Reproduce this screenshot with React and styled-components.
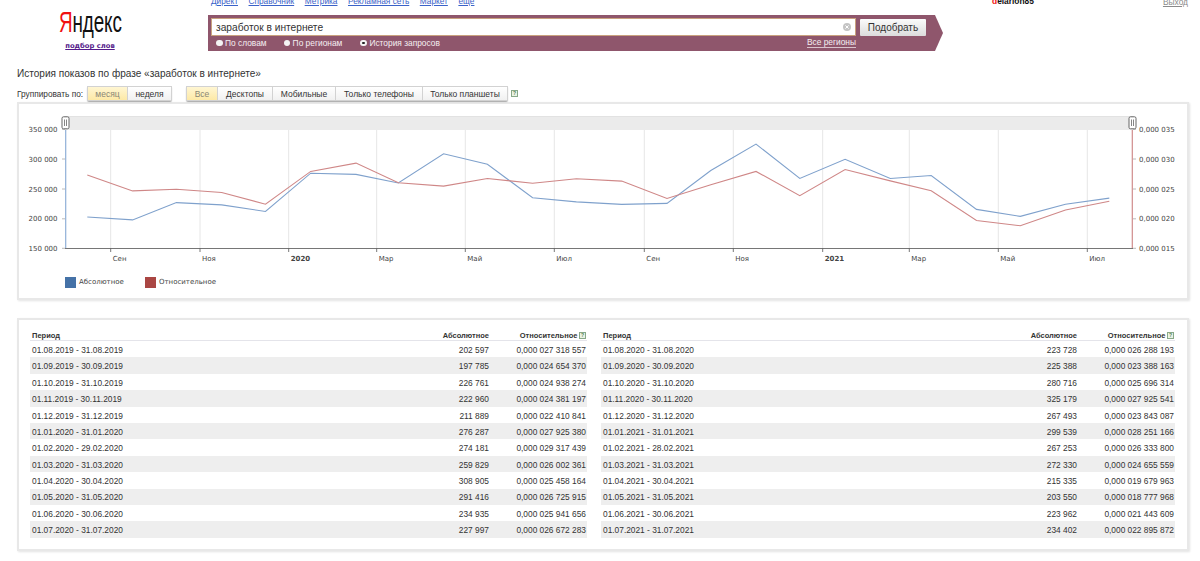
import React from 'react';
import styled, { createGlobalStyle } from 'styled-components';

const Global = createGlobalStyle`
  html, body { margin: 0; padding: 0; background: #fff; }
  body { font-family: "Liberation Sans", Arial, sans-serif; color: #333; }
  #root { width: 1200px; height: 561px; overflow: hidden; }
`;

const Page = styled.div`
  width: 1200px;
  height: 561px;
  overflow: hidden;
`;

const Header = styled.header`
  display: flex;
  height: 67px;
  align-items: flex-start;
`;

const LogoColumn = styled.div`
  width: 180px;
  margin-right: 28px;
  padding-top: 6px;
  display: flex;
  flex-direction: column;
  align-items: center;
`;

const LogoBox = styled.div`
  width: 62px;
  height: 31px;
  overflow: visible;
`;

const LogoText = styled.div`
  font-size: 29.5px;
  line-height: 31px;
  color: #111;
  white-space: nowrap;
  transform: scaleX(0.64);
  transform-origin: left center;
  letter-spacing: -0.2px;
  span { color: #f01010; }
`;

const WordsLink = styled.a`
  margin-top: 5px;
  font-family: "DejaVu Sans", sans-serif;
  font-size: 6.8px;
  font-weight: bold;
  color: #551a8b;
  text-decoration: underline;
`;

const SearchColumn = styled.div`
  width: 735px;
`;

const Nav = styled.nav`
  display: flex;
  gap: 10.5px;
  height: 15px;
  margin-top: -4px;
  padding-left: 3px;
  font-size: 8.3px;
  line-height: 11px;
`;

const NavLink = styled.a`
  color: #3a62c8;
  text-decoration: underline;
`;

const Band = styled.div`
  width: 735px;
  height: 36px;
  margin-top: 4px;
  background: #8f566c;
  clip-path: polygon(0 0, 727px 0, 735px 18px, 727px 36px, 0 36px);
  box-sizing: border-box;
  padding: 3px 0 0 3px;
`;

const SearchRow = styled.div`
  display: flex;
  align-items: center;
  gap: 4px;
`;

const InputBox = styled.div`
  width: 645px;
  height: 18px;
  box-sizing: border-box;
  background: #fff;
  border: 1px solid #c9a27e;
  padding: 0 4px 0 4px;
  display: flex;
  align-items: center;
  justify-content: space-between;
  font-size: 10.2px;
  color: #333;
`;

const ClearIcon = styled.svg`
  width: 8px;
  height: 8px;
  flex: none;
`;

const PickButton = styled.button`
  width: 66px;
  height: 17px;
  padding: 0;
  border: 0;
  border-radius: 1px;
  background: linear-gradient(#fbfbfb, #dcdcdc);
  font-family: inherit;
  font-size: 10px;
  color: #333;
`;

const OptionsRow = styled.div`
  display: flex;
  align-items: center;
  height: 14px;
  padding: 0 0 0 5px;
  width: 645px;
  box-sizing: border-box;
  font-size: 8.4px;
  color: #f5eef1;
`;

const Option = styled.label`
  display: flex;
  align-items: center;
  gap: 2.5px;
  margin-right: ${p => p.$gap}px;
`;

const RadioMark = styled.i`
  width: 6.5px;
  height: 6.5px;
  border-radius: 50%;
  background: ${p => (p.$on ? '#222' : '#f4f4f4')};
  border: ${p => (p.$on ? '2px solid #f4f4f4' : '0')};
  box-sizing: border-box;
`;

const Regions = styled.a`
  margin-left: auto;
  color: #f5eef1;
  border-bottom: 1px solid #d9c3cc;
  line-height: 9px;
`;

const UserArea = styled.div`
  flex: 1;
  display: flex;
  justify-content: space-between;
  padding: 0 12px 0 49px;
  margin-top: -4px;
`;

const UserName = styled.b`
  font-size: 8.4px;
  line-height: 10px;
  color: #111;
  span { color: #f01010; }
`;

const Logout = styled.a`
  margin-top: 1px;
  font-size: 8.4px;
  line-height: 10px;
  color: #8a8a8a;
  text-decoration: underline;
`;

const Main = styled.main`
  padding: 0 11px 0 17px;
`;

const Title = styled.h1`
  margin: 0;
  height: 16px;
  font-size: 10.05px;
  font-weight: normal;
  line-height: 14px;
  color: #333;
`;

const Toolbar = styled.div`
  display: flex;
  align-items: center;
  height: 17px;
  margin-top: 2px;
  font-size: 8.5px;
  color: #333;
`;

const GroupLabel = styled.span`
  width: 70px;
  font-size: 8.3px;
`;

const Segments = styled.div`
  display: flex;
  height: 15px;
  margin-right: ${p => p.$gap || 0}px;
  border-radius: 2px;
  box-shadow: 0 1px 1px #aaa;
`;

const Segment = styled.button`
  width: ${p => p.$w}px;
  height: 15px;
  padding: 0;
  border: 1px solid #d2d2d2;
  border-left-width: ${p => (p.$first ? 1 : 0)}px;
  font-family: inherit;
  font-size: 8.5px;
  color: ${p => (p.$on ? '#8b8775' : '#333')};
  background: ${p => (p.$on ? 'linear-gradient(#fff6d3, #fde9a6)' : 'linear-gradient(#fff, #f1f1f1)')};
`;

const Help = styled.span`
  display: inline-block;
  width: 7px;
  height: 7px;
  box-sizing: border-box;
  border: 1px solid #88a888;
  background: #eaf3e4;
  color: #4f7a4f;
  font-size: 5px;
  font-weight: bold;
  line-height: 5px;
  text-align: center;
  flex: none;
`;

const Card = styled.section`
  width: 1172px;
  box-sizing: border-box;
  border: 2px solid #e8e8e8;
  box-shadow: 1px 1px 2px #e4e4e4;
  background: #fff;
`;

const ChartCard = styled(Card)`
  height: 198px;
`;

const ChartSvg = styled.svg`
  display: block;
  width: 1168px;
  height: 164px;
  font-family: "DejaVu Sans", sans-serif;
  font-size: 7px;
  fill: #444;
`;

const Legend = styled.div`
  display: flex;
  align-items: center;
  height: 12px;
  margin-top: 8px;
  padding-left: 46px;
  font-family: "DejaVu Sans", sans-serif;
  font-size: 7px;
  color: #444;
`;

const LegendItem = styled.span`
  display: flex;
  align-items: center;
  gap: 3px;
  width: 80px;
`;

const Swatch = styled.i`
  width: 11px;
  height: 11px;
  background: ${p => p.$c};
`;

const TableCard = styled(Card)`
  height: 233px;
  margin-top: 18px;
  padding: 7px 12px 0 11px;
  display: flex;
  justify-content: space-between;
`;

const Table = styled.div`
  width: ${p => p.$w}px;
`;

const HeadRow = styled.div`
  display: grid;
  grid-template-columns: 1fr 80px ${p => p.$rel}px;
  height: 14px;
  box-sizing: border-box;
  padding: 4px 1px 0 2px;
  align-items: center;
  border-bottom: 1px solid #e4e4ea;
  font-size: 7.5px;
  font-weight: bold;
  color: #333;
`;

const Row = styled.div`
  display: grid;
  grid-template-columns: 1fr 80px ${p => p.$rel}px;
  height: 16.4px;
  box-sizing: border-box;
  padding: 1.5px 1px 0 2px;
  align-items: center;
  font-size: 8.35px;
  color: #333;
  background: ${p => (p.$alt ? '#eeeeee' : '#fff')};
`;

const Num = styled.span`
  text-align: right;
  white-space: nowrap;
`;

const RelHead = styled(Num)`
  display: flex;
  justify-content: flex-end;
  align-items: center;
  gap: 1.5px;
`;

const L = [
  ['01.08.2019 - 31.08.2019', '202 597', '0,000 027 318 557'],
  ['01.09.2019 - 30.09.2019', '197 785', '0,000 024 654 370'],
  ['01.10.2019 - 31.10.2019', '226 761', '0,000 024 938 274'],
  ['01.11.2019 - 30.11.2019', '222 960', '0,000 024 381 197'],
  ['01.12.2019 - 31.12.2019', '211 889', '0,000 022 410 841'],
  ['01.01.2020 - 31.01.2020', '276 287', '0,000 027 925 380'],
  ['01.02.2020 - 29.02.2020', '274 181', '0,000 029 317 439'],
  ['01.03.2020 - 31.03.2020', '259 829', '0,000 026 002 361'],
  ['01.04.2020 - 30.04.2020', '308 905', '0,000 025 458 164'],
  ['01.05.2020 - 31.05.2020', '291 416', '0,000 026 725 915'],
  ['01.06.2020 - 30.06.2020', '234 935', '0,000 025 941 656'],
  ['01.07.2020 - 31.07.2020', '227 997', '0,000 026 672 283'],
];
const R = [
  ['01.08.2020 - 31.08.2020', '223 728', '0,000 026 288 193'],
  ['01.09.2020 - 30.09.2020', '225 388', '0,000 023 388 163'],
  ['01.10.2020 - 31.10.2020', '280 716', '0,000 025 696 314'],
  ['01.11.2020 - 30.11.2020', '325 179', '0,000 027 925 541'],
  ['01.12.2020 - 31.12.2020', '267 493', '0,000 023 843 087'],
  ['01.01.2021 - 31.01.2021', '299 539', '0,000 028 251 166'],
  ['01.02.2021 - 28.02.2021', '267 253', '0,000 026 333 800'],
  ['01.03.2021 - 31.03.2021', '272 330', '0,000 024 655 559'],
  ['01.04.2021 - 30.04.2021', '215 335', '0,000 019 679 963'],
  ['01.05.2021 - 31.05.2021', '203 550', '0,000 018 777 968'],
  ['01.06.2021 - 30.06.2021', '223 962', '0,000 021 443 609'],
  ['01.07.2021 - 31.07.2021', '234 402', '0,000 022 895 872'],
];

const ALL = [...L, ...R];
const Y0 = 248.3;
const YH = 119;
const px = i => {
  const d = (Date.UTC(2019, 7 + i, 16) - Date.UTC(2019, 8, 1)) / 864e5;
  return 110.7 + d * 1.46;
};
const absLine = ALL.map((r, i) => {
  const v = +r[1].replace(/\s/g, '');
  return `${px(i).toFixed(1)},${(Y0 - ((v - 150000) / 200000) * YH).toFixed(1)}`;
}).join(' ');
const relLine = ALL.map((r, i) => {
  const v = +r[2].replace(/\s/g, '').replace(',', '.');
  return `${px(i).toFixed(1)},${(Y0 - ((v - 0.000015) / 0.00002) * YH).toFixed(1)}`;
}).join(' ');

const TICKS = [
  [110.7, 'Сен'], [200, 'Ноя'], [288.7, '2020', 1], [376.7, 'Мар'], [465.3, 'Май'], [554.3, 'Июл'],
  [644.3, 'Сен'], [733.3, 'Ноя'], [822.7, '2021', 1], [909.3, 'Мар'], [998.3, 'Май'], [1087.3, 'Июл'],
];
const LEFT = ['350 000', '300 000', '250 000', '200 000', '150 000'];
const RIGHT = ['0,000 035', '0,000 030', '0,000 025', '0,000 020', '0,000 015'];
const ys = [129.3, 159, 189, 218.8, 248.3];

const Handle = ({ x }) => (
  <g>
    <rect x={x} y="116.8" width="7" height="12" rx="1.5" fill="#fff" stroke="#666" strokeWidth="1" />
    <path d={`M${x + 2.5} 119.5v6.5M${x + 4.5} 119.5v6.5`} stroke="#666" strokeWidth="0.8" />
  </g>
);

const Chart = () => (
  <ChartSvg viewBox="19 104 1168 164">
    <rect x="65" y="116" width="1068" height="14" fill="#ebebeb" />
    <path d="M65 116.5H1133" stroke="#e2e2e2" />
    {TICKS.map(([x]) => (
      <path key={x} d={`M${x} 130V248`} stroke="#e6e6e6" strokeWidth="1" />
    ))}
    <path d="M65.7 130V248.3" stroke="#8fb0d8" strokeWidth="1.2" />
    <path d="M1132.3 130V248.3" stroke="#d08c8c" strokeWidth="1.2" />
    {ys.map(y => (
      <path key={y} d={`M62 ${y}h3M1133 ${y}h3`} stroke="#a8a8a8" strokeWidth="0.8" />
    ))}
    <path d="M65 248.5H1133" stroke="#666" strokeWidth="0.9" />
    {TICKS.map(([x]) => (
      <path key={x} d={`M${x} 248.5v3.5`} stroke="#555" strokeWidth="0.8" />
    ))}
    <polyline points={absLine} fill="none" stroke="#7fa1cc" strokeWidth="1.1" />
    <polyline points={relLine} fill="none" stroke="#cf8787" strokeWidth="1.1" />
    {LEFT.map((t, i) => (
      <text key={t} x="57.5" y={ys[i] + 2.6} textAnchor="end">{t}</text>
    ))}
    {RIGHT.map((t, i) => (
      <text key={t} x="1139" y={ys[i] + 2.6}>{t}</text>
    ))}
    {TICKS.map(([x, t, b]) => (
      <text key={x} x={x + 2} y="261" fontWeight={b ? 'bold' : 'normal'}>{t}</text>
    ))}
    <Handle x={62} />
    <Handle x={1129} />
  </ChartSvg>
);

const DataTable = ({ rows, w, rel }) => (
  <Table $w={w}>
    <HeadRow $rel={rel}>
      <span>Период</span>
      <Num>Абсолютное</Num>
      <RelHead>Относительное<Help>?</Help></RelHead>
    </HeadRow>
    {rows.map((r, i) => (
      <Row key={r[0]} $rel={rel} $alt={i % 2 === 1}>
        <span>{r[0]}</span>
        <Num>{r[1]}</Num>
        <Num>{r[2]}</Num>
      </Row>
    ))}
  </Table>
);

export default function App() {
  return (
    <Page>
      <Global />
      <Header>
        <LogoColumn>
          <LogoBox><LogoText><span>Я</span>ндекс</LogoText></LogoBox>
          <WordsLink>подбор слов</WordsLink>
        </LogoColumn>
        <SearchColumn>
          <Nav>
            {['Директ', 'Справочник', 'Метрика', 'Рекламная сеть', 'Маркет', 'ещё'].map(t => (
              <NavLink key={t}>{t}</NavLink>
            ))}
          </Nav>
          <Band>
            <SearchRow>
              <InputBox>
                заработок в интернете
                <ClearIcon viewBox="0 0 8 8">
                  <circle cx="4" cy="4" r="4" fill="#c4c4c4" />
                  <path d="M2.4 2.4l3.2 3.2M5.6 2.4L2.4 5.6" stroke="#fff" strokeWidth="1" />
                </ClearIcon>
              </InputBox>
              <PickButton>Подобрать</PickButton>
            </SearchRow>
            <OptionsRow>
              <Option $gap={17}><RadioMark />По словам</Option>
              <Option $gap={18}><RadioMark />По регионам</Option>
              <Option $gap={0}><RadioMark $on />История запросов</Option>
              <Regions>Все регионы</Regions>
            </OptionsRow>
          </Band>
        </SearchColumn>
        <UserArea>
          <UserName><span>d</span>elarion85</UserName>
          <Logout>Выход</Logout>
        </UserArea>
      </Header>
      <Main>
        <Title>История показов по фразе «заработок в интернете»</Title>
        <Toolbar>
          <GroupLabel>Группировать по:</GroupLabel>
          <Segments $gap={14}>
            <Segment $w={41} $first $on>месяц</Segment>
            <Segment $w={44}>неделя</Segment>
          </Segments>
          <Segments $gap={3}>
            <Segment $w={32} $first $on>Все</Segment>
            <Segment $w={55}>Десктопы</Segment>
            <Segment $w={63}>Мобильные</Segment>
            <Segment $w={87}>Только телефоны</Segment>
            <Segment $w={85}>Только планшеты</Segment>
          </Segments>
          <Help>?</Help>
        </Toolbar>
        <ChartCard>
          <Chart />
          <Legend>
            <LegendItem><Swatch $c="#4572a7" />Абсолютное</LegendItem>
            <LegendItem><Swatch $c="#aa4643" />Относительное</LegendItem>
          </Legend>
        </ChartCard>
        <TableCard>
          <DataTable rows={L} w={557} rel={97} />
          <DataTable rows={R} w={574} rel={97} />
        </TableCard>
      </Main>
    </Page>
  );
}
